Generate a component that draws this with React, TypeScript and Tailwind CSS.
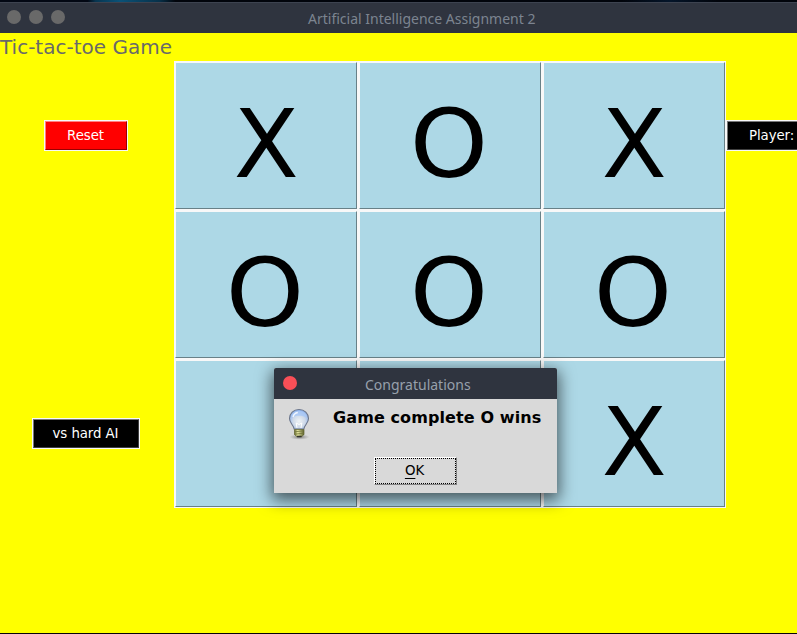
import type { ReactNode } from "react";

const board: string[][] = [
  ["X", "O", "X"],
  ["O", "O", "O"],
  ["", "", "X"],
];

function Cell({ mark }: { mark: string }) {
  return (
    <button className="h-[149px] w-[184px] border border-[#f8f8f8]">
      <span className="flex h-full w-full items-center justify-center border border-t-[#f8f8f8] border-r-[#688188] border-b-[#688188] border-l-[#f8f8f8] bg-[#add8e6] pt-[19px] text-[94px] leading-none text-black">
        <span className={mark === "O" ? "-ml-[2px] scale-x-[1.06]" : "scale-x-[1.01]"}>{mark}</span>
      </span>
    </button>
  );
}

function ActionButton({ className, children }: { className: string; children: ReactNode }) {
  return (
    <button className="h-[31px] shrink-0 border border-[#f8f8f8] text-[13.33px] leading-none tracking-[-0.08px] text-white">
      <span className={`flex h-full w-full items-center border pt-px ${className}`}>{children}</span>
    </button>
  );
}

function Bulb() {
  return (
    <svg width="32" height="34" viewBox="0 0 32 34">
      <defs>
        <radialGradient id="glass" cx="50%" cy="60%" r="58%">
          <stop offset="0" stopColor="#eef2f5" />
          <stop offset="0.55" stopColor="#ced9e8" />
          <stop offset="1" stopColor="#8bb2ef" />
        </radialGradient>
        <linearGradient id="cap" x1="0" x2="1">
          <stop offset="0" stopColor="#64682f" />
          <stop offset="0.35" stopColor="#e8e9a2" />
          <stop offset="1" stopColor="#5b5e2c" />
        </linearGradient>
        <radialGradient id="floor">
          <stop offset="0" stopColor="#555" stopOpacity="0.75" />
          <stop offset="1" stopColor="#777" stopOpacity="0" />
        </radialGradient>
      </defs>
      <ellipse cx="16.5" cy="29" rx="10" ry="2.8" fill="url(#floor)" />
      <path
        d="M16 1.500c-5.500 0-9.500 4-9.500 9.100 0 4.600 4 6.200 4.600 10.400h9.800c.6-4.200 4.600-5.800 4.600-10.400 0-5.100-4-9.100-9.500-9.100Z"
        fill="url(#glass)"
        stroke="#6d7689"
        strokeWidth="1.1"
      />
      <path d="M8.500 9.500C8.500 5.500 12 3 16 3s7.500 2.500 7.500 6.500c-4-2.500-11-2.500-15 0Z" fill="#a9c8f6" opacity=".8" />
      <path d="M10 9c.6-2.400 2.200-4 4.800-4.500" fill="none" stroke="#f2f7ff" strokeWidth="1.300" />
      <path d="m14 20-.8-5 2.800 1.500 2.800-1.500-.8 5" fill="none" stroke="#fff" strokeWidth="1" />
      <path d="M11.500 21.500h9.500v4.800l-2 2.200h-5.500l-2-2.200Z" fill="url(#cap)" stroke="#60632f" strokeWidth=".7" />
      <path d="m11.500 23.800 9.500-1M11.500 26.200l9.500-1" stroke="#707337" strokeWidth=".8" />
      <path d="M14 28.500h4.500" stroke="#30312b" strokeWidth="1.500" />
    </svg>
  );
}

function Dialog() {
  return (
    <div className="absolute top-[368px] left-[274px] h-[125px] w-[283px] rounded-t-[2px] bg-[#d9d9d9] shadow-[0_5px_16px_2px_rgba(0,0,0,0.6)]">
      <header className="flex h-[31px] items-center rounded-t-[2px] bg-[#2f343f] pl-[9px] font-['Noto_Sans',sans-serif]">
        <span className="mb-px size-[14px] rounded-full bg-[#f94f57]" />
        <span className="ml-[68px] pt-[2px] text-[14px] leading-5 whitespace-nowrap text-[#97a0ac]">
          Congratulations
        </span>
      </header>
      <div className="flex pt-[9px] pl-[9px]">
        <Bulb />
        <p className="ml-[18px] text-[16px] leading-5 font-bold tracking-[0.1px] whitespace-nowrap text-black">
          Game complete O wins
        </p>
      </div>
      <div className="flex justify-center pt-[15px]">
        <button className="h-[28px] w-[83px] border border-t-white border-r-[#828282] border-b-[#828282] border-l-white">
          <span className="flex h-full w-full items-center justify-center border border-dotted border-black pr-[2px] text-[13.33px] leading-none text-black">
            <span className="underline underline-offset-[3px]">O</span>K
          </span>
        </button>
      </div>
    </div>
  );
}

export default function App() {
  return (
    <div className="relative flex h-[634px] w-[797px] flex-col overflow-hidden bg-[#ffff00] font-['DejaVu_Sans',sans-serif]">
      <div className="h-[2px] bg-[linear-gradient(90deg,#020713_0_11%,#073550_12%,#0a5278_15%,#07314a_20%,#01040b_22%_78%,#04152a_84%,#01040b_90%)]" />
      <header className="flex h-[31px] items-center border-t border-[#3d4350] bg-[#2f343f] pl-[7px] font-['Noto_Sans',sans-serif]">
        <div className="mb-[2px] flex gap-[8px]">
          <span className="size-[14px] rounded-full bg-[#696969]" />
          <span className="size-[14px] rounded-full bg-[#696969]" />
          <span className="size-[14px] rounded-full bg-[#696969]" />
        </div>
        <h1 className="ml-[243px] pt-[2px] text-[14px] leading-5 whitespace-nowrap text-[#7c8490]">
          Artificial Intelligence Assignment 2
        </h1>
      </header>
      <main className="flex flex-1 flex-col">
        <h2 className="h-[28px] text-[20px] leading-[28px] whitespace-nowrap text-[#696969]">Tic-tac-toe Game</h2>
        {board.map((row, r) => (
          <div key={r} className="flex h-[149px] items-center">
            <div className="flex w-[174px] shrink-0 justify-center">
              {r === 0 && (
                <div className="mr-[2px] flex w-[84px] flex-col">
                  <ActionButton className="justify-center border-t-[#ff8080] border-r-[#990000] border-b-[#990000] border-l-[#ff8080] bg-[#ff0000] pr-px">
                    Reset
                  </ActionButton>
                </div>
              )}
              {r === 2 && (
                <div className="mr-[2px] flex w-[108px] flex-col">
                  <ActionButton className="justify-center border-t-[#777777] border-r-[#404040] border-b-[#404040] border-l-[#777777] bg-black pr-px">
                    vs hard AI
                  </ActionButton>
                </div>
              )}
            </div>
            <div className="flex shrink-0">
              {row.map((mark, c) => (
                <Cell key={c} mark={mark} />
              ))}
            </div>
            {r === 0 && (
              <ActionButton className="border-t-[#777777] border-r-[#404040] border-b-[#404040] border-l-[#777777] bg-black pr-8 pl-[21px] whitespace-nowrap">
                Player:
              </ActionButton>
            )}
          </div>
        ))}
      </main>
      <div className="h-px bg-[#080408]" />
      <Dialog />
    </div>
  );
}
